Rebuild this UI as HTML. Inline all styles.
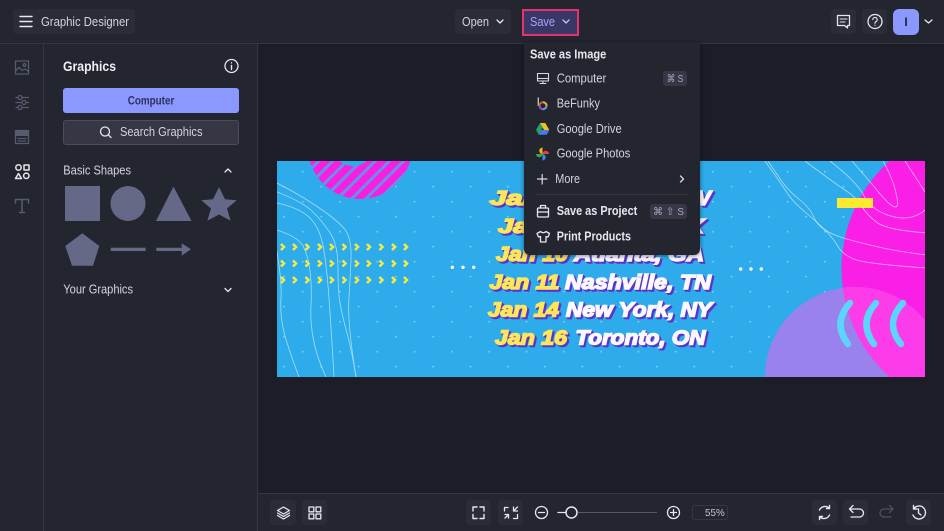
<!DOCTYPE html>
<html><head><meta charset="utf-8">
<style>
html,body{margin:0;padding:0;background:#1c1d27;}
#p{position:relative;width:944px;height:531px;overflow:hidden;background:#1c1d27;font-family:"Liberation Sans",sans-serif;color:#d9dae3;}
.a{position:absolute;}
.btn{position:absolute;background:#2a2c38;border-radius:4px;}
svg{position:absolute;overflow:visible;}
.s{fill:none;stroke:#e6e7ee;stroke-width:1.3;stroke-linecap:round;stroke-linejoin:round;}
.d{fill:none;stroke:#585a70;stroke-width:1.3;stroke-linecap:round;stroke-linejoin:round;}
.m{stroke:#d9dae3;}
.sh{fill:#666887;}
.u text{font-family:"Liberation Sans","DejaVu Sans",sans-serif;font-size:12.5px;fill:#d3d4de;}
.u text.b{font-weight:bold;fill:#e6e7ee;}
.l{font-family:"Liberation Sans",sans-serif;font-weight:bold;font-style:italic;font-size:20.5px;stroke-width:1.5px;filter:drop-shadow(1px 1px 0 #5a34c8) drop-shadow(1px 1px 0 #5a34c8);}
.y{fill:#fde65a;stroke:#fde65a;}
.w{fill:#fbf8ff;stroke:#fbf8ff;}
</style></head><body><div id="p">

<!-- top bar / panels -->
<div class="a" style="left:0;top:0;width:944px;height:43px;background:#23252f;border-bottom:1px solid #343642;"></div>
<div class="a" style="left:0;top:44px;width:43px;height:487px;background:#23252f;border-right:1px solid #343642;"></div>
<div class="a" style="left:44px;top:44px;width:213px;height:487px;background:#23252f;border-right:1px solid #343642;"></div>
<div class="a" style="left:258px;top:493px;width:686px;height:38px;background:#23252f;border-top:1px solid #343642;"></div>

<!-- buttons -->
<div class="btn" style="left:13px;top:9px;width:122px;height:25px;"></div>
<div class="btn" style="left:455px;top:9px;width:56px;height:25px;"></div>
<div class="a" style="left:522px;top:9px;width:53px;height:23px;background:#3a3767;border:2px solid #e8316f;"></div>
<div class="btn" style="left:831px;top:9px;width:25px;height:25px;"></div>
<div class="btn" style="left:862px;top:9px;width:25px;height:25px;"></div>
<div class="a" style="left:893px;top:9px;width:26px;height:26px;border-radius:6px;background:#8b98ff;"></div>
<div class="a" style="left:63px;top:88px;width:176px;height:25px;background:#8b98ff;border-radius:3px;"></div>
<div class="a" style="left:63px;top:120px;width:174px;height:23px;background:#353744;border:1px solid #4b4d5d;border-radius:3px;"></div>

<svg style="left:0;top:0" width="944" height="531">
<!-- top icons -->
<path class="s" style="stroke-width:1.4" d="M20 16.500H32M20 21.500H32M20 26.500H32"/>
<path class="s" d="M497 20L500 23L503 20"/>
<path fill="none" stroke="#c2c4f5" stroke-width="1.3" stroke-linecap="round" stroke-linejoin="round" d="M563 20L566 23L569 20"/>
<path class="s" d="M837.500 15.500H849.500V25.500H847.500V28L844.500 25.500H837.500Z"/><path class="s" style="stroke-width:1" d="M840 19H847M840 22H845"/>
<circle class="s" cx="875" cy="21.500" r="7"/><path class="s" style="stroke-width:1.200" d="M872.800 19.500A2.200 2.200 0 1 1 875.500 21.800Q875 22.200 875 23.200M875 25.200V25.300"/>
<path class="s" d="M925 20L928.500 23L932 20"/>

<!-- left rail icons -->
<rect class="d" x="15.500" y="61" width="13" height="13"/><circle class="d" cx="24.500" cy="65" r="1.300"/><path class="d" d="M15.500 71L19 67.500L22.500 70.500L25 69L28.500 71.500"/>
<path class="d" d="M16 97.500H28.500M16 102.500H28.500M16 107.500H28.500"/><circle cx="20" cy="97.500" r="2" fill="#23252f" stroke="#585a70" stroke-width="1.300"/><circle cx="24" cy="102.500" r="2" fill="#23252f" stroke="#585a70" stroke-width="1.300"/><circle cx="20" cy="107.500" r="2" fill="#23252f" stroke="#585a70" stroke-width="1.300"/>
<rect class="d" x="15.500" y="130.500" width="13" height="13"/><path d="M15.500 130.500H28.500V136H15.500Z" fill="#585a70"/><path class="d" d="M18 138.500H26M18 141H26"/>
<circle class="s" style="stroke-width:1.500" cx="18.500" cy="167.500" r="2.700"/><rect class="s" style="stroke-width:1.500" x="24" y="165" width="5" height="5"/><path class="s" style="stroke-width:1.500" d="M18.500 173.500L21.500 178.500H15.500Z"/><circle class="s" style="stroke-width:1.500" cx="26.300" cy="175.800" r="2.700"/>
<path class="d" style="stroke-width:1.500" d="M15.500 203V199.500H28.500V203M22 199.500V212.500M19.500 212.500H24.500"/>

<!-- panel icons -->
<circle class="s" cx="231.500" cy="66" r="6.500"/><path class="s" style="stroke-width:1.400" d="M231.500 65.500V69.500M231.500 62.800V62.900"/>
<circle class="s" cx="105" cy="131.500" r="4.500"/><path class="s" d="M108.500 135L111 137.500"/>
<path class="s" d="M225 172L228 169L231 172"/><path class="s" d="M225 288.500L228 291.500L231 288.500"/>
<rect class="sh" x="65" y="186" width="35" height="35"/>
<circle class="sh" cx="128" cy="203.500" r="17.500"/>
<path class="sh" d="M173.500 186.500L191.500 221H156Z"/>
<path class="sh" d="M219 187L225 199.300L236.700 200.300L227 208.500L230.700 220.700L219 214.500L207.300 220.700L211 208.500L201.300 200.300L213 199.300Z"/>
<path class="sh" d="M82.300 233.300L99.300 246L93 265.700H72L65.300 246Z"/>
<rect class="sh" x="110.700" y="247.700" width="35" height="3.300"/>
<path class="sh" d="M156.300 247.700H181.700V243.300L191 249.300L181.700 255.700V251H156.300Z"/>
</svg>

<!-- canvas artwork -->
<svg style="left:277px;top:161px" width="648" height="216" viewBox="0 0 648 216">
<defs>
<clipPath id="c"><rect width="648" height="216"/></clipPath>
<clipPath id="k"><circle cx="578" cy="216" r="90"/></clipPath>
<pattern id="dots" x="0" y="0" width="37.300" height="30" patternUnits="userSpaceOnUse">
<circle cx="25.700" cy="10.700" r=".9" fill="#86cef2"/><circle cx="7" cy="25.700" r=".9" fill="#86cef2"/>
</pattern>
<pattern id="stripes" width="10" height="10" patternUnits="userSpaceOnUse" patternTransform="rotate(45)">
<rect width="10" height="10" fill="#f71fe2"/><rect x="8" width="2" height="10" fill="#6a8fe6"/><rect x="0" width="1" height="10" fill="#6a8fe6"/>
</pattern>
</defs>
<g clip-path="url(#c)">
<rect width="648" height="216" fill="#2dabea"/>
<rect width="648" height="216" fill="url(#dots)"/>
<circle cx="83" cy="-14" r="52" fill="url(#stripes)"/>
<circle cx="76" cy="-17" r="22" fill="#2dabea"/>
<circle cx="710" cy="108" r="145.500" fill="#f91fe6"/>
<circle cx="578" cy="216" r="90" fill="#9a82ee"/>
<circle cx="710" cy="108" r="145.500" fill="#fb3ce8" clip-path="url(#k)"/>
<g fill="none" stroke="#a4dff6" stroke-width=".8" stroke-linecap="round">
<path d="M0 22L13 29Q26 36 43 47.500Q60 59 67.500 68Q75 77 74 99Q73 121 72 136Q71 151 73 171Q75 191 79 216"/>
<path d="M0 31Q26 41 36 51Q46 61 53.500 72.500Q61 84 61 107Q61 131 63 142Q65 154 70 172Q75 191 79 216"/>
<path d="M0 42Q23 47 33 57Q43 67 46.500 87Q50 107 52.500 144Q55 181 57 216"/>
<path d="M0 69Q21 76 26 85Q31 94 33 110Q35 127 34 144Q33 161 36.500 179Q40 197 49 216"/>
<path d="M0 91Q5 121 4 137Q3 154 6.500 169Q10 184 22 216"/>
</g>
<g fill="none" stroke="#fff" stroke-opacity=".6" stroke-width=".8" stroke-linecap="round">
<path d="M488 0Q503 21 509.500 31Q516 41 528 51Q540 61 548 69Q556 77 561 85.500Q566 94 578 98.500Q590 103 650 107"/>
<path d="M491 0Q503 18 508 24.500Q513 31 523 39Q533 47 536.500 55.500Q540 64 548 69Q556 74 568 77.500Q580 81 601.500 86Q623 91 650 94"/>
<path d="M528 0Q556 21 568 29Q580 37 585 45.500Q590 54 600 61.500Q610 69 650 72"/>
<path d="M553 0Q580 21 586.500 34Q593 47 608 53Q623 59 635 56Q645 53 650 47"/>
<path d="M575 0Q590 17 601.500 31Q613 45 618 46Q622 46 620 37Q618 25 613 14Q610 7 606 0"/>
<path d="M628 0L650 34"/>
</g>
<rect x="560" y="37" width="36" height="10" fill="#fde92f"/>
<g fill="none" stroke="#5bd5fb" stroke-width="6.500" stroke-linecap="round">
<path d="M573 142Q555 162 571 183"/><path d="M599 142Q581 162 597 183"/><path d="M626 142Q607 162 624 183"/>
</g>
<g fill="#fff"><circle cx="175.300" cy="106.300" r="1.700"/><circle cx="186" cy="106.300" r="1.700"/><circle cx="196.700" cy="106.300" r="1.700"/><circle cx="463.700" cy="108" r="1.700"/><circle cx="474" cy="108" r="1.700"/><circle cx="484.300" cy="108" r="1.700"/></g>
<g fill="none" stroke="#f7ea3f" stroke-width="2.500" stroke-linejoin="miter">
<path d="M4 83l3 3l-3 3M16 83l3 3l-3 3M28.500 83l3 3l-3 3M41 83l3 3l-3 3M53 83l3 3l-3 3M65.500 83l3 3l-3 3M78 83l3 3l-3 3M90 83l3 3l-3 3M102.500 83l3 3l-3 3M115 83l3 3l-3 3M127 83l3 3l-3 3"/>
<path transform="translate(0,16.500)" d="M4 83l3 3l-3 3M16 83l3 3l-3 3M28.500 83l3 3l-3 3M41 83l3 3l-3 3M53 83l3 3l-3 3M65.500 83l3 3l-3 3M78 83l3 3l-3 3M90 83l3 3l-3 3M102.500 83l3 3l-3 3M115 83l3 3l-3 3M127 83l3 3l-3 3"/>
<path transform="translate(0,33)" d="M4 83l3 3l-3 3M16 83l3 3l-3 3M28.500 83l3 3l-3 3M41 83l3 3l-3 3M53 83l3 3l-3 3M65.500 83l3 3l-3 3M78 83l3 3l-3 3M90 83l3 3l-3 3M102.500 83l3 3l-3 3M115 83l3 3l-3 3M127 83l3 3l-3 3"/>
</g>
</g>
</svg>

<!-- artwork text -->
<svg style="left:0;top:0" width="944" height="531">
<g class="l">
<text class="y" x="490" y="205" textLength="75" lengthAdjust="spacingAndGlyphs">Jan 5</text><text class="w" x="570" y="205" textLength="141" lengthAdjust="spacingAndGlyphs">Las Vegas, NV</text>
<text class="y" x="498" y="233" textLength="70" lengthAdjust="spacingAndGlyphs">Jan 8</text><text class="w" x="573" y="233" textLength="131" lengthAdjust="spacingAndGlyphs">Dallas, TX</text>
<text class="y" x="496" y="261" textLength="72" lengthAdjust="spacingAndGlyphs">Jan 10</text><text class="w" x="574" y="261" textLength="130" lengthAdjust="spacingAndGlyphs">Atlanta, GA</text>
<text class="y" x="489.500" y="289" textLength="70" lengthAdjust="spacingAndGlyphs">Jan 11</text><text class="w" x="565" y="289" textLength="146" lengthAdjust="spacingAndGlyphs">Nashville, TN</text>
<text class="y" x="488" y="316.500" textLength="71" lengthAdjust="spacingAndGlyphs">Jan 14</text><text class="w" x="566" y="316.500" textLength="146" lengthAdjust="spacingAndGlyphs">New York, NY</text>
<text class="y" x="495" y="344.500" textLength="72" lengthAdjust="spacingAndGlyphs">Jan 16</text><text class="w" x="575.500" y="344.500" textLength="130" lengthAdjust="spacingAndGlyphs">Toronto, ON</text>
</g>
</svg>

<!-- dropdown menu -->
<div class="a" style="left:524px;top:42px;width:176px;height:213px;background:#23252f;border-radius:0 0 6px 6px;box-shadow:0 1px 5px rgba(0,0,0,.45);"></div>
<div class="a" style="left:536px;top:194px;width:152px;height:1px;background:#33353f;"></div>
<div class="a" style="left:663px;top:71px;width:24px;height:15px;background:#363847;border-radius:3px;"></div>
<div class="a" style="left:650px;top:204px;width:37px;height:15px;background:#363847;border-radius:3px;"></div>

<!-- bottom bar buttons -->
<div class="btn" style="left:270px;top:500px;width:26px;height:25px;"></div>
<div class="btn" style="left:302px;top:500px;width:25px;height:25px;"></div>
<div class="btn" style="left:466px;top:500px;width:25px;height:25px;"></div>
<div class="btn" style="left:498px;top:500px;width:25px;height:25px;"></div>
<div class="btn" style="left:812px;top:500px;width:25px;height:25px;"></div>
<div class="btn" style="left:843px;top:500px;width:25px;height:25px;"></div>
<div class="btn" style="left:906px;top:500px;width:25px;height:25px;"></div>
<div class="a" style="left:692px;top:505px;width:34px;height:13px;border:1px solid #343642;border-radius:3px;"></div>

<svg class="u" style="left:0;top:0" width="944" height="531">
<!-- UI text -->
<text x="41" y="26" textLength="88" lengthAdjust="spacingAndGlyphs">Graphic Designer</text>
<text x="462" y="26" textLength="27" lengthAdjust="spacingAndGlyphs">Open</text>
<text x="530" y="26" textLength="25" lengthAdjust="spacingAndGlyphs" style="fill:#a3a6f5">Save</text>
<text x="906" y="26" text-anchor="middle" style="font-size:12px;font-weight:bold;fill:#23252f">I</text>
<text class="b" x="63" y="71" textLength="53" lengthAdjust="spacingAndGlyphs" style="font-size:14px;fill:#eeeff4">Graphics</text>
<text x="127.700" y="104.500" textLength="46.600" lengthAdjust="spacingAndGlyphs" style="font-size:11.500px;font-weight:bold;fill:#2f3160">Computer</text>
<text x="120" y="136" textLength="82.500" lengthAdjust="spacingAndGlyphs">Search Graphics</text>
<text x="63.300" y="174.300" textLength="67.700" lengthAdjust="spacingAndGlyphs">Basic Shapes</text>
<text x="63.300" y="293.500" textLength="69.700" lengthAdjust="spacingAndGlyphs">Your Graphics</text>
<text class="b" x="530" y="58.500" textLength="76.300" lengthAdjust="spacingAndGlyphs">Save as Image</text>
<text x="556.700" y="82.300" textLength="49.600" lengthAdjust="spacingAndGlyphs">Computer</text>
<text x="556.700" y="107.700" textLength="43.300" lengthAdjust="spacingAndGlyphs">BeFunky</text>
<text x="556.700" y="133" textLength="65" lengthAdjust="spacingAndGlyphs">Google Drive</text>
<text x="556.700" y="157.700" textLength="73.600" lengthAdjust="spacingAndGlyphs">Google Photos</text>
<text x="555.300" y="183" textLength="24.700" lengthAdjust="spacingAndGlyphs">More</text>
<text class="b" x="556.700" y="215" textLength="80.600" lengthAdjust="spacingAndGlyphs">Save as Project</text>
<text class="b" x="556.700" y="240.500" textLength="74.300" lengthAdjust="spacingAndGlyphs">Print Products</text>
<text x="666.700" y="82" textLength="16.600" lengthAdjust="spacingAndGlyphs" style="font-size:10.500px;fill:#a8aabb">⌘ S</text>
<text x="653" y="215" textLength="31" lengthAdjust="spacingAndGlyphs" style="font-size:10.500px;fill:#a8aabb">⌘ ⇧ S</text>
<text x="705" y="516" textLength="19.700" lengthAdjust="spacingAndGlyphs" style="font-size:10.500px;fill:#c5c6d2">55%</text>

<!-- menu icons -->
<rect class="s m" x="537.500" y="73.500" width="11" height="7.500" style="stroke-width:1.100"/><path class="s m" style="stroke-width:1.100" d="M537.500 78.500H548.500M543 81V83.500M540 83.500H546"/>
<path d="M538.300 97.500V106" stroke="#b8b9c9" stroke-width="1.400" fill="none"/>
<circle cx="543" cy="105.700" r="3.500" fill="none" stroke="#e05a3a" stroke-width="2"/><path d="M543 102.200A3.500 3.500 0 0 1 546.500 105.700" fill="none" stroke="#e6b53c" stroke-width="2"/><path d="M546.500 105.700A3.500 3.500 0 0 1 543 109.200" fill="none" stroke="#4aa7d8" stroke-width="2"/><path d="M543 109.200A3.500 3.500 0 0 1 539.500 105.700" fill="none" stroke="#7a59c9" stroke-width="2"/>
<path d="M540 123H545.300L549.300 130H544Z" fill="#f6bd20"/><path d="M540 123L536 130L538.700 134.700L542.700 127.500Z" fill="#1ea362"/><path d="M538.700 134.700H546.700L549.300 130H541.200Z" fill="#3f80ee"/>
<path d="M542.500 154V147.500A3.250 3.250 0 0 0 542.500 154Z" fill="#f5b616"/>
<path d="M542.500 154H549A3.250 3.250 0 0 0 542.500 154Z" fill="#ea4335"/>
<path d="M542.500 154V160.500A3.250 3.250 0 0 0 542.500 154Z" fill="#4285f4"/>
<path d="M542.500 154H536A3.250 3.250 0 0 0 542.500 154Z" fill="#34a853"/>
<path class="s m" style="stroke-width:1.200" d="M537.500 179H547M542.200 174.500V184"/>
<path class="s m" d="M680.500 176L683.500 179L680.500 182"/>
<rect class="s" x="537.500" y="208" width="11" height="9" rx="1"/><path class="s" d="M540.500 208V205.500H545.500V208M537.500 212H548.500"/>
<path class="s" d="M540.500 231.500L537 233.500L538.500 237L540.500 236.500V242H546V236.500L548 237L549.500 233.500L546 231.500Q543.300 234 540.500 231.500Z"/>

<!-- bottom icons -->
<path class="s" d="M283.500 507L289.500 510.500L283.500 514L277.500 510.500Z"/><path class="s" d="M277.500 513L283.500 516.500L289.500 513M277.500 515.500L283.500 519L289.500 515.500"/>
<rect class="s" x="309" y="507" width="4.800" height="4.800"/><rect class="s" x="316" y="507" width="4.800" height="4.800"/><rect class="s" x="309" y="514" width="4.800" height="4.800"/><rect class="s" x="316" y="514" width="4.800" height="4.800"/>
<path class="s" style="stroke-width:1.400" d="M473 511V507H477M480 507H484V511M484 514.500V518.500H480M477 518.500H473V514.500"/>
<path class="s" style="stroke-width:1.300" d="M504.500 511V507.500H508M513.500 507V511H517.500M513.500 511L517.500 507M513.500 518.500H517.500V514.500M508.500 514.500H505M508.500 514.500V518M508.500 514.500L505 518"/>
<circle class="s" cx="541.500" cy="512.500" r="6"/><path class="s" d="M538.500 512.500H544.500"/>
<path class="s" d="M558 512.500H565"/>
<path d="M578 512.500H657" stroke="#565867" stroke-width="1"/>
<circle cx="571.500" cy="512.500" r="5.500" fill="#23252f" stroke="#e6e7ee" stroke-width="1.500"/>
<circle class="s" cx="673.500" cy="512.500" r="6"/><path class="s" d="M670.500 512.500H676.500M673.500 509.500V515.500"/>
<path class="s" style="stroke-width:1.400" d="M819.500 510A6 6 0 0 1 829.500 508.500M829.500 505.500V508.500H826.500M829.500 515A6 6 0 0 1 819.500 516.500M819.500 519.500V516.500H822.500"/>
<path class="s" d="M849.500 509H859.500A4 4 0 0 1 859.500 517H851M853 505.500L849.500 509L853 512.500"/>
<path class="d" style="stroke:#4e5062" d="M893 509H884A4 4 0 0 0 884 517H891M889.500 505.500L893 509L889.500 512.500"/>
<path class="s" style="stroke-width:1.400" d="M913.500 509A6.500 6.500 0 1 1 913 515M913.500 505.500V509H917M918.500 509V513L921 515"/>
</svg>

</div></body></html>
